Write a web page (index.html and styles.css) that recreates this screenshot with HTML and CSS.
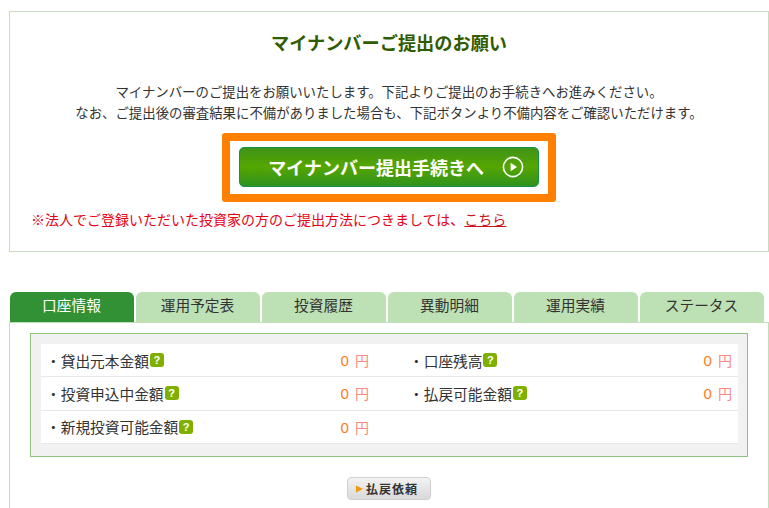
FILE: index.html
```
<!DOCTYPE html>
<html lang="ja">
<head>
<meta charset="utf-8">
<title>マイナンバーご提出のお願い</title>
<link rel="stylesheet" href="styles.css">
</head>
<body>
<section class="notice">
  <h2 class="notice-title">マイナンバーご提出のお願い</h2>
  <p class="notice-text">マイナンバーのご提出をお願いいたします。下記よりご提出のお手続きへお進みください。<br>なお、ご提出後の審査結果に不備がありました場合も、下記ボタンより不備内容をご確認いただけます。</p>
  <div class="cta-frame">
    <a class="cta" href="#">
      <span class="cta-label">マイナンバー提出手続きへ</span>
      <svg class="cta-icon" width="22" height="22" viewBox="0 0 22 22"><circle cx="11" cy="11" r="9.6" fill="none" stroke="#fff" stroke-width="1.6"/><path d="M8.6 6.8 15 11l-6.4 4.2z" fill="#fff"/></svg>
    </a>
  </div>
  <p class="notice-corp">※法人でご登録いただいた投資家の方のご提出方法につきましては、<a href="#">こちら</a></p>
</section>
<nav class="tabs">
  <a class="tab active" href="#">口座情報</a>
  <a class="tab" href="#">運用予定表</a>
  <a class="tab" href="#">投資履歴</a>
  <a class="tab" href="#">異動明細</a>
  <a class="tab" href="#">運用実績</a>
  <a class="tab" href="#">ステータス</a>
</nav>
<section class="panel">
  <div class="summary">
    <div class="rows">
      <div class="row"><span class="label">・貸出元本金額<i class="help">?</i></span><span class="val">0 <em>円</em></span></div>
      <div class="row"><span class="label">・口座残高<i class="help">?</i></span><span class="val">0 <em>円</em></span></div>
      <div class="row"><span class="label">・投資申込中金額<i class="help">?</i></span><span class="val">0 <em>円</em></span></div>
      <div class="row"><span class="label">・払戻可能金額<i class="help">?</i></span><span class="val">0 <em>円</em></span></div>
      <div class="row"><span class="label">・新規投資可能金額<i class="help">?</i></span><span class="val">0 <em>円</em></span></div>
      <div class="row"></div>
    </div>
  </div>
  <div class="actions"><a class="refund" href="#"><svg width="8" height="8" viewBox="0 0 8 8"><path d="M0 0.5 7 4 0 7.5z" fill="#f5960f"/></svg>払戻依頼</a></div>
</section>
</body>
</html>
```
FILE: styles.css
```
* { box-sizing: border-box; }
html, body { margin: 0; height: 508px; overflow: hidden; background: #fff; }
body {
  font-family: "Liberation Sans", "Noto Sans CJK JP", sans-serif;
  font-size: 13.4px;
  color: #333;
  padding: 11px 0 0 9px;
  width: 769px;
}
a { text-decoration: none; }
.notice {
  height: 241px;
  border: 1px solid #c9dcc0;
  text-align: center;
  padding-top: 21px;
}
.notice-title { margin: 0; font-size: 18.2px; line-height: 22px; font-weight: bold; color: #2f5c00; }
.notice-text { margin: 27px 0 0; line-height: 21px; }
.cta-frame {
  width: 334px;
  height: 69px;
  margin: 9px auto 0;
  border: 8px solid #ff8000;
  border-radius: 3px;
  padding: 6px 9px;
}
.cta {
  display: flex;
  align-items: center;
  justify-content: flex-end;
  gap: 18px;
  height: 40px;
  padding-right: 14px;
  border: 1px solid #12934a;
  border-radius: 5px;
  background: linear-gradient(#3f9318, #56a600 50%, #2f9120);
  color: #fff;
  font-size: 18px;
  font-weight: bold;
}
.cta-icon { display: block; }
.notice-corp { margin: 8px 0 0 21px; text-align: left; font-size: 14px; line-height: 20px; color: #e60012; }
.notice-corp a { color: #c8161d; text-decoration: underline; }
.tabs { display: flex; gap: 2px; margin: 40px 0 0 0.5px; height: 30px; }
.tab {
  width: 124px;
  height: 30px;
  padding-top: 4px;
  background: #bde0b4;
  border-radius: 6px 6px 0 0;
  text-align: center;
  font-size: 14.7px;
  line-height: 20px;
  color: #333;
}
.tab.active { background: #329035; color: #fff; }
.panel {
  height: 186px;
  border-left: 1px solid #bfe0b6;
  border-right: 1px solid #bfe0b6;
  border-top: 1px solid #bfe0b6;
  padding: 10px 20px 0;
}
.summary {
  height: 124px;
  border: 1px solid #8dc47e;
  background: #f1f1f1;
  padding: 10px 9px 11px 10px;
}
.rows { display: grid; grid-template-columns: 368px 1fr; background: #fff; }
.row {
  display: flex;
  justify-content: space-between;
  align-items: center;
  height: 33.3px;
  border-bottom: 1px solid #e8e8e8;
  padding-right: 6px;
  font-size: 14.7px;
}
.row:nth-child(odd) { padding-right: 40px; padding-left: 5px; }
.label { display: flex; align-items: center; }
.help {
  width: 14px; height: 14px; margin-left: 1px;
  border-radius: 3px;
  background: #7fb000;
  color: #fff;
  font: bold 11px/14px "Liberation Sans", sans-serif;
  text-align: center;
}
.val { color: #ff7a1a; font-size: 15px; }
.val em { font-style: normal; font-size: 14px; color: #f98a80; margin-left: 2px; }
.actions { display: flex; justify-content: center; margin-top: 20px; }
.refund {
  display: flex; align-items: center; gap: 2px;
  width: 84px; height: 23px;
  padding-left: 8px;
  border: 1px solid #d0d0d0;
  border-radius: 4px;
  background: linear-gradient(#f2f2f2, #d9d9d9);
  color: #333;
  font-size: 12px;
  font-weight: bold;
  letter-spacing: 1px;
}
```
